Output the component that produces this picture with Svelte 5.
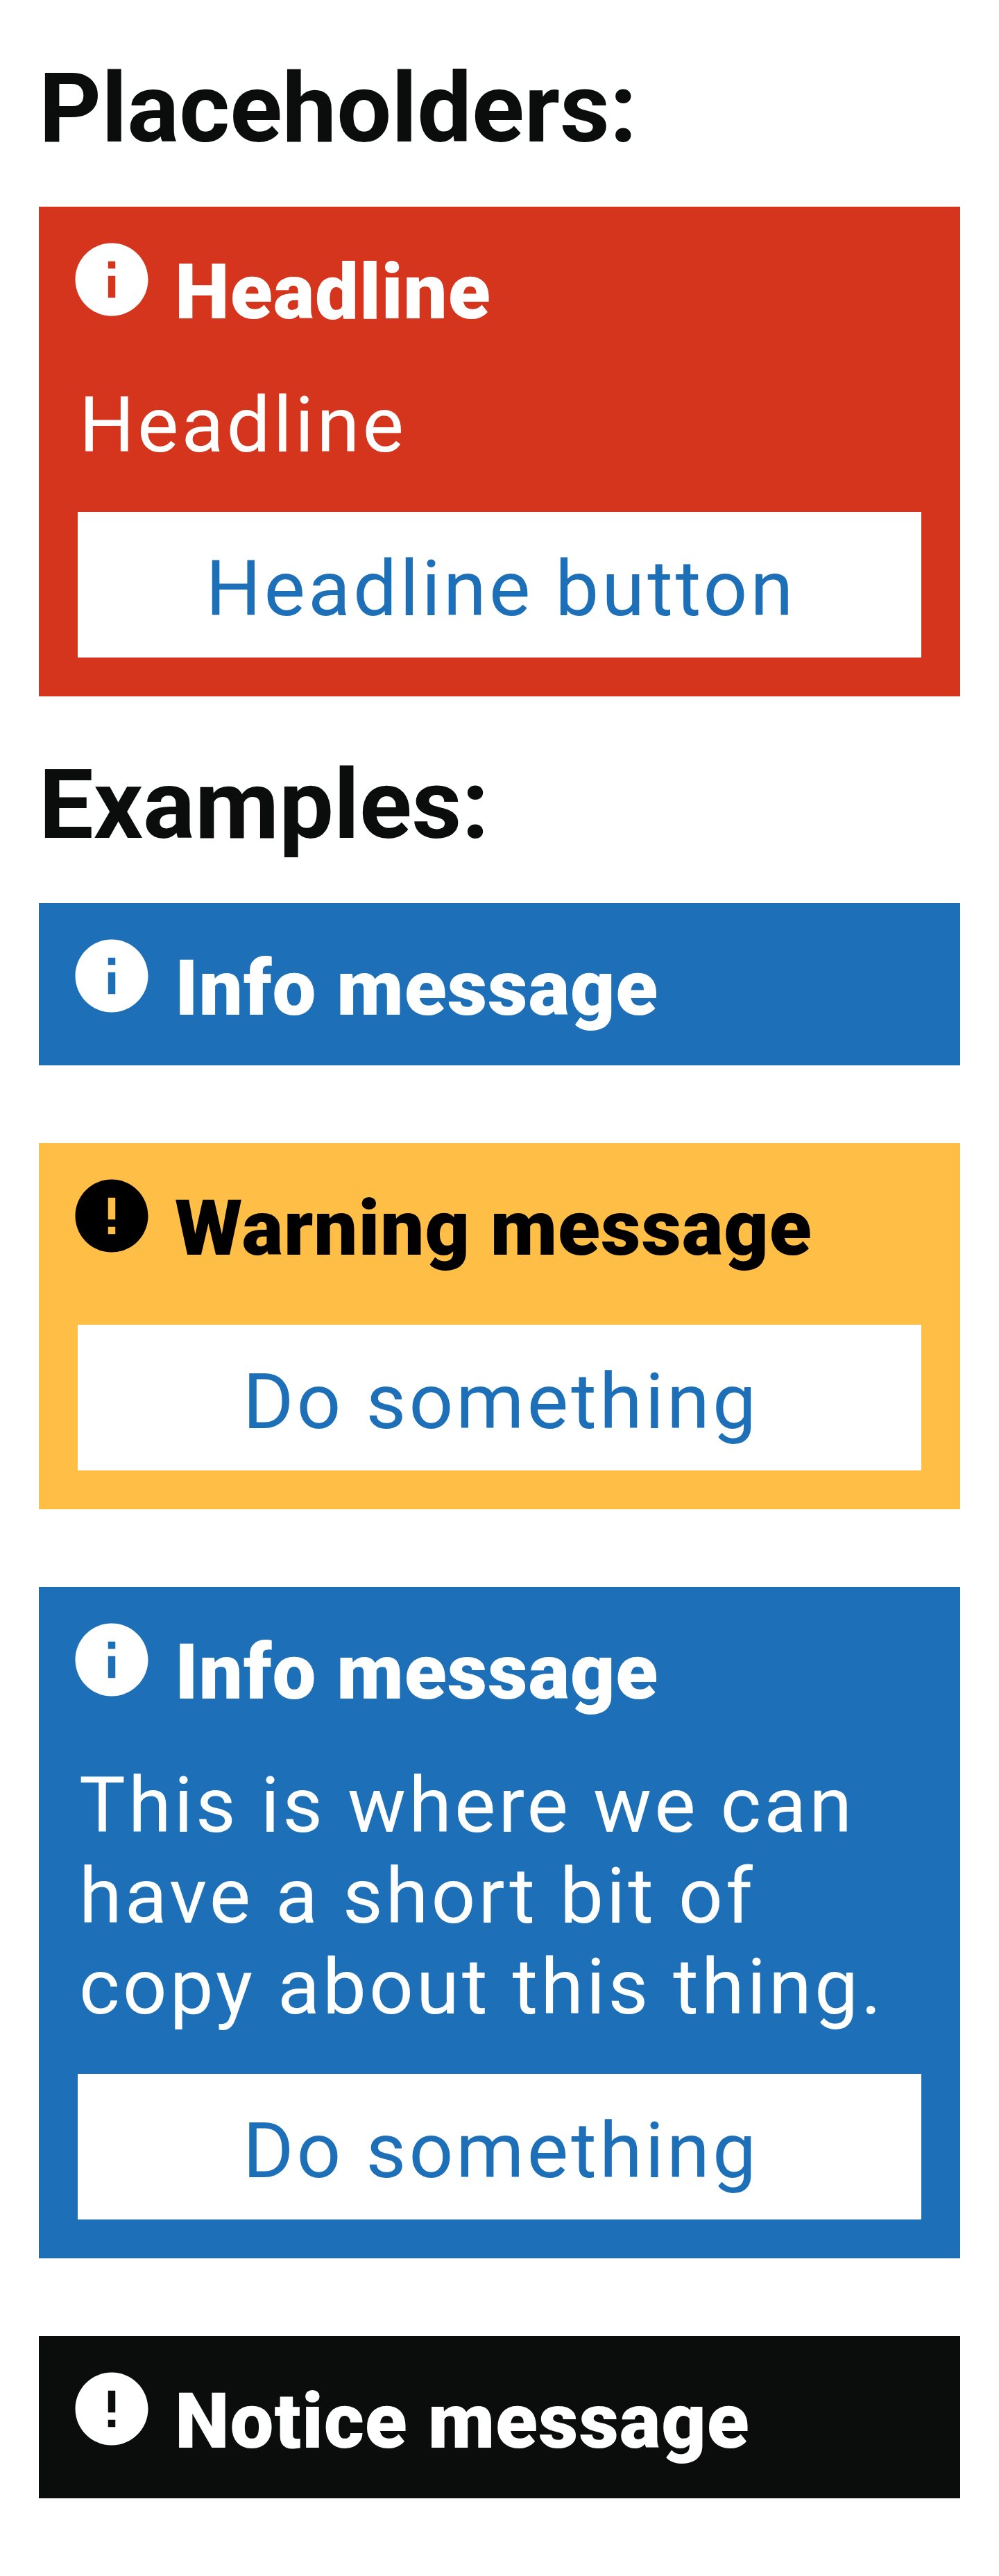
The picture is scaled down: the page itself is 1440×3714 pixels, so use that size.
<script>
  const placeholders = [
    { tone: 'error', icon: 'info', title: 'Headline', body: 'Headline', action: 'Headline button' }
  ];
  const examples = [
    { tone: 'info', icon: 'info', title: 'Info message' },
    { tone: 'warning', icon: 'alert', title: 'Warning message', action: 'Do something' },
    {
      tone: 'info',
      icon: 'info',
      title: 'Info message',
      body: 'This is where we can have a short bit of copy about this thing.',
      action: 'Do something'
    },
    { tone: 'notice', icon: 'alert', title: 'Notice message' }
  ];
  const icons = {
    info: 'M12 2C6.48 2 2 6.48 2 12s4.48 10 10 10 10-4.48 10-10S17.52 2 12 2zm1 15h-2v-6h2v6zm0-8h-2V7h2v2z',
    alert: 'M12 2C6.48 2 2 6.48 2 12s4.48 10 10 10 10-4.48 10-10S17.52 2 12 2zm1 15h-2v-2h2v2zm0-4h-2V7h2v6z'
  };
</script>

{#snippet banner(item)}
  <article class="banner {item.tone}">
    <header>
      <svg class="icon" viewBox="0 0 24 24" aria-hidden="true"><path d={icons[item.icon]} /></svg>
      <h3>{item.title}</h3>
    </header>
    {#if item.body}<p>{item.body}</p>{/if}
    {#if item.action}
      <button class:after-body={item.body}>{item.action}</button>
    {/if}
  </article>
{/snippet}

<main>
  <section>
    <h2>Placeholders:</h2>
    <div class="stack">
      {#each placeholders as item}{@render banner(item)}{/each}
    </div>
  </section>
  <section>
    <h2>Examples:</h2>
    <div class="stack">
      {#each examples as item}{@render banner(item)}{/each}
    </div>
  </section>
</main>

<style>
  :global(body) {
    background: #fff;
  }
  main {
    padding: 0 56px 112px;
    font-family: Roboto, sans-serif;
    color: #0b0c0c;
  }
  section {
    padding-top: 74px;
  }
  h2 {
    margin: 0 0 60px;
    font-size: 140px;
    line-height: 164px;
    font-weight: 700;
  }
  .stack {
    display: flex;
    flex-direction: column;
    gap: 112px;
  }
  .banner {
    padding: 42px 56px 56px;
    color: #fff;
  }
  .error {
    background: #d4351c;
  }
  .info {
    background: #1d70b8;
  }
  .warning {
    background: #ffbf47;
    color: #000;
  }
  .notice {
    background: #0b0c0c;
  }
  header {
    display: flex;
    align-items: flex-start;
    gap: 28px;
    height: 136px;
    margin-left: -14px;
  }
  .icon {
    flex: none;
    width: 126px;
    height: 126px;
    fill: currentColor;
  }
  h3 {
    margin: 0;
    padding: 15px 0 0;
    font-size: 112px;
    line-height: 131px;
    font-weight: 900;
    letter-spacing: 0.95px;
    white-space: nowrap;
  }
  p {
    margin: 71px 0 0;
    padding-left: 2px;
    font-size: 112px;
    line-height: 131px;
    letter-spacing: 4.1px;
  }
  button {
    display: block;
    width: 100%;
    margin: 84px 0 0;
    padding: 45px 0 34px 4px;
    border: 0;
    border-radius: 0;
    background: #fff;
    color: #1d70b8;
    font: 400 112px/131px Roboto, sans-serif;
    letter-spacing: 4.1px;
    text-align: center;
  }
  .after-body {
    margin-top: 60px;
  }
</style>
